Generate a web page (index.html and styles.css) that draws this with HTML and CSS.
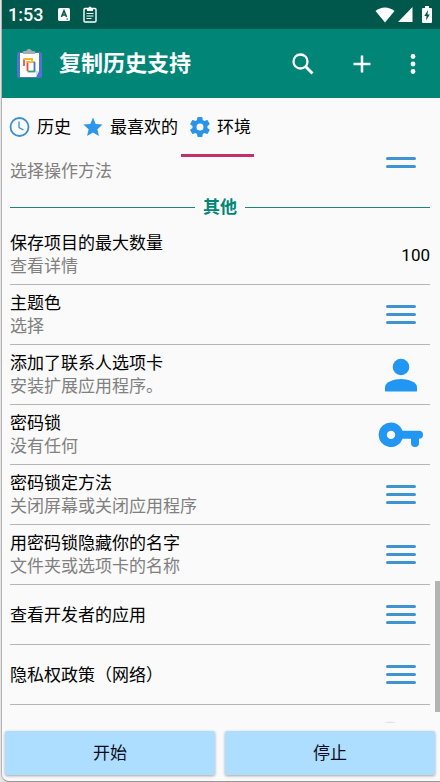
FILE: index.html
```html
<!DOCTYPE html>
<html lang="zh-CN">
<head>
<meta charset="utf-8">
<meta name="viewport" content="width=device-width, initial-scale=1">
<title>复制历史支持</title>
<link rel="stylesheet" href="styles.css">
</head>
<body>
<svg class="defs" aria-hidden="true">
  <symbol id="menu" viewBox="0 0 30 20"><path d="M1.500 1.500h27M1.500 9.500h27M1.500 17.500h27" stroke="#3f93d0" stroke-width="3" stroke-linecap="round"/></symbol>
</svg>
<div class="app">
  <header>
    <div class="status">
      <span class="time">1:53</span>
      <svg class="badge" width="12" height="13" viewBox="0 0 12 13"><rect width="12" height="13" rx="1.5" fill="#fff"/><path d="M3.4 9 6 2.8 8.6 9M4.3 7h3.4" fill="none" stroke="#00574b" stroke-width="1.5"/><path d="M8.5 11h1.5" stroke="#00574b"/></svg>
      <svg class="clip" width="14" height="17" viewBox="0 0 14 17"><rect x="1" y="2.5" width="12" height="13.5" rx="1" fill="none" stroke="#fff" stroke-width="1.4"/><path d="M4 2h1.5a1.5 1.5 0 0 1 3 0H10v3H4z" fill="#fff"/><path d="M3.5 7.5h7M3.5 10h7M3.5 12.5h5" stroke="#fff"/></svg>
      <span class="spacer"></span>
      <svg class="wifi" width="20" height="16" viewBox="0 0 20 16"><path d="M.5 4C6-.8 14-.8 19.500 4L10 15.500z" fill="#fff"/></svg>
      <svg class="signal" width="15" height="15" viewBox="0 0 15 15"><path d="M14.500 0v15H0z" fill="#fff"/></svg>
      <svg width="10" height="17" viewBox="0 0 10 17"><path d="M3 0h4v2h2q1 0 1 1v13q0 1-1 1H1q-1 0-1-1V3q0-1 1-1h2z" fill="#fff"/><path d="M6 4 2.300 10h2.200L4 14.500 7.800 8.500H5.500z" fill="#00574b"/></svg>
    </div>
    <div class="toolbar">
      <svg class="logo" width="26" height="30" viewBox="0 0 26 30"><rect x="0" y="3" width="25" height="26" rx="2.500" fill="#4f74cf"/><path d="M3 4h19v18l-3 6H3z" fill="#fff"/><path d="M19 28v-6h3z" fill="#d5dbe8"/><path d="M6 5V3q0-1 1-1h2q1-2 3-2t3 2h2q1 0 1 1v2z" fill="#a5adae"/><path d="M7 17V10" stroke="#ea5545" stroke-width="1.800"/><path d="M6.500 10H15v2" fill="none" stroke="#f4b52d" stroke-width="1.800"/><path d="M10.500 12v10" stroke="#e64a3c" stroke-width="1.800"/><path d="M10 13h8" stroke="#f5b62e" stroke-width="1.800"/><path d="M17.500 13v9" stroke="#4472d0" stroke-width="1.800"/><path d="M10.500 22.500h8" stroke="#36a466" stroke-width="1.800"/></svg>
      <h1>复制历史支持</h1>
      <button class="action" aria-label="搜索"><svg width="22" height="22" viewBox="0 0 22 22"><circle cx="8.500" cy="8.500" r="7" fill="none" stroke="#fff" stroke-width="2.300"/><path d="m13.800 13.800 6.700 6.700" stroke="#fff" stroke-width="3"/></svg></button>
      <button class="action" aria-label="添加"><svg width="18" height="18" viewBox="0 0 18 18"><path d="M9 .5v17M.5 9h17" stroke="#fff" stroke-width="2.500"/></svg></button>
      <button class="action more" aria-label="更多"><svg width="6" height="20" viewBox="0 0 6 20"><g fill="#fff"><circle cx="3" cy="2.500" r="2.400"/><circle cx="3" cy="10" r="2.400"/><circle cx="3" cy="17.500" r="2.400"/></g></svg></button>
    </div>
  </header>
  <nav class="tabs">
    <a class="tab" href="#history"><svg width="21" height="20" viewBox="0 0 21 20"><circle cx="10.500" cy="10" r="9" fill="none" stroke="#3b8fd3" stroke-width="1.800"/><path d="M10 4.500v6l4.500 2.500" fill="none" stroke="#3b8fd3" stroke-width="1.300"/></svg>历史</a>
    <a class="tab" href="#favorites"><svg width="20" height="20" viewBox="0 0 20 20"><path d="m10 .5 2.700 6.500 6.900.6-5.200 4.600 1.500 6.800-5.900-3.600L4.100 19l1.500-6.800L.4 7.600 7.300 7z" fill="#2b96ee"/></svg>最喜欢的</a>
    <a class="tab selected" href="#settings"><svg width="20" height="20" viewBox="2 2 20 20"><path d="M19.400 13c0-.3.100-.6.100-1s0-.7-.1-1l2.100-1.600c.2-.2.300-.4.100-.6l-2-3.500c-.1-.2-.4-.3-.6-.2l-2.500 1c-.5-.4-1.100-.7-1.700-1l-.4-2.600c0-.3-.2-.5-.5-.5h-4c-.2 0-.4.200-.5.400l-.4 2.700c-.6.200-1.100.6-1.700 1l-2.400-1c-.3-.1-.5 0-.7.200l-2 3.500c-.1.200 0 .5.200.600L4.500 11c0 .3-.1.700-.1 1s0 .700.1 1l-2.100 1.600c-.2.200-.3.400-.2.600l2 3.500c.200.200.400.300.700.200l2.400-1c.600.400 1.100.800 1.700 1l.4 2.700c.1.200.3.400.5.400h4c.300 0 .500-.2.500-.4l.4-2.700c.6-.2 1.200-.6 1.700-1l2.500 1c.200.1.500 0 .600-.2l2-3.500c.2-.2.100-.5-.1-.600zM12 15.500a3.500 3.500 0 1 1 0-7 3.500 3.500 0 0 1 0 7z" fill="#2b94e9"/></svg>环境</a>
  </nav>
  <main>
    <div class="row scrolled"><div class="label"><p>选择操作方法</p></div><svg class="icon" width="30" height="20"><use href="#menu"/></svg></div>
    <h2>其他</h2>
    <div class="row"><div class="label"><h3>保存项目的最大数量</h3><p>查看详情</p></div><span class="value">100</span></div>
    <div class="row"><div class="label"><h3>主题色</h3><p>选择</p></div><svg class="icon" width="30" height="20"><use href="#menu"/></svg></div>
    <div class="row"><div class="label"><h3>添加了联系人选项卡</h3><p>安装扩展应用程序。</p></div><svg class="icon" width="34" height="34" viewBox="0 0 34 34"><circle cx="17" cy="9" r="8.300" fill="#2196f3"/><path d="M1 33v-4c0-5 9-8 16-8s16 3 16 8v4q0 .500-.500.500h-31Q1 33.500 1 33z" fill="#2196f3"/></svg></div>
    <div class="row"><div class="label"><h3>密码锁</h3><p>没有任何</p></div><svg class="icon" width="46" height="26" viewBox="0 0 46 26"><path d="M13 .5a12.300 12.300 0 1 0 11.600 16.300h8.400V21a4 4 0 0 0 8 0v-4.200a4 4 0 0 0 0-8H24.600A12.300 12.300 0 0 0 13 .5zm0 8.200a4.200 4.200 0 1 1 0 8.400 4.200 4.200 0 0 1 0-8.400z" fill="#2196f3"/></svg></div>
    <div class="row"><div class="label"><h3>密码锁定方法</h3><p>关闭屏幕或关闭应用程序</p></div><svg class="icon" width="30" height="20"><use href="#menu"/></svg></div>
    <div class="row"><div class="label"><h3>用密码锁隐藏你的名字</h3><p>文件夹或选项卡的名称</p></div><svg class="icon" width="30" height="20"><use href="#menu"/></svg></div>
    <div class="row"><div class="label"><h3>查看开发者的应用</h3></div><svg class="icon" width="30" height="20"><use href="#menu"/></svg></div>
    <div class="row"><div class="label"><h3>隐私权政策（网络）</h3></div><svg class="icon" width="30" height="20"><use href="#menu"/></svg></div>
    <div class="next"><svg width="14" height="4" viewBox="0 0 14 4"><path d="M1 3q6-3 12 0z" fill="#e2e2e2"/></svg></div>
    <span class="thumb"></span>
  </main>
  <footer>
    <button class="cta">开始</button>
    <button class="cta">停止</button>
  </footer>
</div>
</body>
</html>
```

FILE: styles.css
```css
* { box-sizing: border-box; }

body {
  margin: 0;
  background: #e4e4e4;
  color: #111;
  font: 17px/23px Roboto, "Noto Sans CJK SC", sans-serif;
}

h1, h2, h3, p { margin: 0; font-size: 17px; font-weight: 400; }
svg { display: block; flex: none; }
button { border: 0; padding: 0; font: inherit; color: inherit; }
.defs { position: absolute; width: 0; height: 0; }

.app {
  display: flex;
  flex-direction: column;
  height: 100vh;
  margin-left: 1px;
  border-left: 1px solid #b4b4b4;
  border-bottom: 1px solid #999;
  border-bottom-left-radius: 8px;
  background: #fafafa;
  overflow: hidden;
}

header { color: #fff; background: #008577; }

.status {
  display: flex;
  align-items: center;
  height: 29px;
  padding: 0 8px 0 6px;
  background: #00574b;
}
.time { font-size: 18px; font-weight: 500; }
.badge { margin-left: 15px; }
.clip { margin-left: 13px; }
.spacer { flex: 1; }
.wifi { margin-right: 3px; }
.signal { margin-right: 9px; }

.toolbar {
  display: flex;
  align-items: center;
  height: 69px;
  padding: 0 5px 0 15px;
}
.toolbar h1 {
  flex: 1;
  margin-left: 16px;
  font-size: 22px;
  line-height: 30px;
  font-weight: 700;
}
.action {
  display: grid;
  place-items: center;
  width: 59px;
  height: 48px;
  background: none;
}
.action.more { width: 44px; }

.tabs {
  display: flex;
  flex: none;
  height: 59px;
}
.tab {
  display: flex;
  align-items: center;
  gap: 7px;
  padding: 2px 5px 0 7px;
  border-bottom: 3px solid transparent;
  color: #000;
  text-decoration: none;
}
.tab.selected { padding: 2px 3px 0 9px; margin-left: -2px; border-color: #c2306a; }

main {
  position: relative;
  flex: 1;
  min-height: 0;
  padding: 0 10px 0 8px;
  overflow: hidden;
}
.row {
  display: flex;
  align-items: center;
  height: 60px;
  border-bottom: 1px solid #b5b5b5;
}
.row.scrolled { margin-top: -28px; border-color: transparent; }
.row.scrolled .label { padding-top: 25px; }
.label { flex: 1; padding-top: 1px; }
.row h3 { color: #000; }
.row p { color: #808080; }
.value { padding-top: 2px; color: #000; }
.icon { width: 58px; }

main h2 {
  display: flex;
  align-items: center;
  gap: 8px;
  height: 36px;
  color: #008577;
  font-weight: 700;
}
main h2::before, main h2::after {
  content: "";
  flex: 1;
  height: 1px;
  background: #1f857b;
}
.next { display: flex; justify-content: flex-end; padding: 15px 33px 0 0; }
.thumb {
  position: absolute;
  right: 0;
  bottom: 13px;
  width: 5px;
  height: 131px;
  background: #b4b4b4;
}

footer {
  display: flex;
  gap: 10px;
  padding: 6px 5px 6px 3px;
}
.cta {
  flex: 1;
  height: 44px;
  border-radius: 2px;
  background: #addeff;
  color: #0a0a1a;
  box-shadow: 0 1px 3px rgba(0, 0, 0, .35);
}
```
